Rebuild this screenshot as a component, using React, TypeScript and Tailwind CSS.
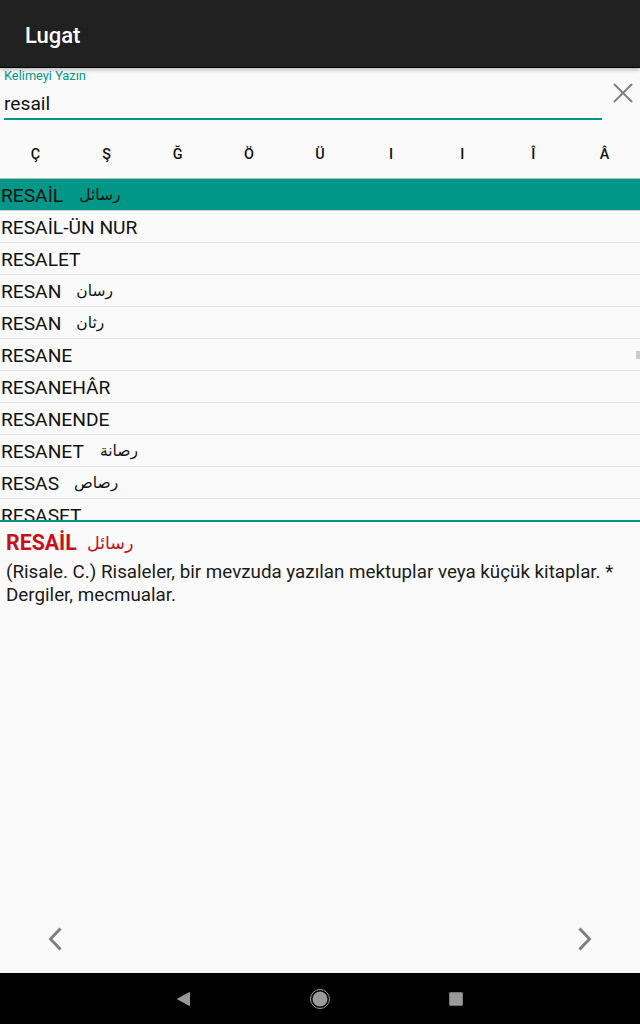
import React from "react";
import { X } from "lucide-react";

const letters = ["Ç", "Ş", "Ğ", "Ö", "Ü", "I", "I", "Î", "Â"];

const words = [
  { word: "RESAİL", arabic: "رسائل", gap: "ml-[16px]" },
  { word: "RESAİL-ÜN NUR" },
  { word: "RESALET" },
  { word: "RESAN", arabic: "رسان", gap: "ml-[15px]" },
  { word: "RESAN", arabic: "رثان", gap: "ml-[15px]" },
  { word: "RESANE" },
  { word: "RESANEHÂR" },
  { word: "RESANENDE" },
  { word: "RESANET", arabic: "رصانة", gap: "ml-[16px]" },
  { word: "RESAS", arabic: "رصاص", gap: "ml-[15px]" },
  { word: "RESASET" },
];

const App = () => {
  return (
    <div className="w-[640px] h-[1024px] flex flex-col bg-[#fafafa] overflow-hidden font-['Roboto',sans-serif]">
      {/* app bar */}
      <div className="h-[68px] shrink-0 bg-[#212121] border-b border-black flex items-center pl-[25px] shadow-[0_2px_4px_rgba(0,0,0,0.25)] z-10">
        <span className="text-[22px] font-medium text-white mt-[4px]">Lugat</span>
      </div>

      {/* search */}
      <div className="h-[52px] shrink-0 flex pl-[4px]">
        <div className="w-[598px] h-[52px] border-b-2 border-[#009688] flex flex-col">
          <span className="text-[12.8px] leading-[14px] text-[#009688] mt-[1px]">Kelimeyi Yazın</span>
          <span className="text-[19.2px] leading-[24px] text-[#111111] mt-[9px]">resail</span>
        </div>
        <div className="flex-1 flex justify-center">
          <X size={34} strokeWidth={1.4} className="text-[#808080] mt-[8px] ml-[4px]" />
        </div>
      </div>

      {/* letters */}
      <div className="h-[58px] shrink-0 grid grid-cols-9 items-center">
        {letters.map((l, i) => (
          <span key={i} className="text-center text-[14.4px] font-medium text-[#111111] pt-[11px]">
            {l}
          </span>
        ))}
      </div>

      {/* word list */}
      <div className="relative h-[342px] shrink-0 overflow-hidden border-t border-[#b0b8b6]">
        {words.map((w, i) => (
          <div
            key={i}
            className={
              i === 0
                ? "h-[32px] shrink-0 flex items-center pl-[1px] pt-[3px] bg-[#009688] border-b border-[#c8cfcd] text-[19.2px] text-[#111111]"
                : "h-[32px] shrink-0 flex items-center pl-[1px] pt-[3px] border-b border-[#e2e2e2] text-[19.2px] text-[#111111]"
            }
          >
            <span>{w.word}</span>
            {w.arabic && (
              <span className={`${w.gap} font-['DejaVu_Sans',sans-serif] text-[15.5px]`} dir="rtl">
                {w.arabic}
              </span>
            )}
          </div>
        ))}
        <div className="absolute right-0 top-[172px] w-[4px] h-[8px] bg-[#cccccc]" />
      </div>

      {/* detail */}
      <div className="flex-1 min-h-0 border-t-2 border-[#009688] px-[6px] pt-[8px] relative">
        <div className="flex items-center h-[26px]">
          <span className="text-[21.33px] font-bold text-[#c8101c]">RESAİL</span>
          <span className="ml-[10px] text-[17.5px] text-[#c8101c] font-['DejaVu_Sans',sans-serif]" dir="rtl">
            رسائل
          </span>
        </div>
        <p className="text-[18.8px] leading-[23px] text-[#1a1a1a] mt-[5px]">
          (Risale. C.) Risaleler, bir mevzuda yazılan mektuplar veya küçük kitaplar. * Dergiler, mecmualar.
        </p>
        <svg width="16" height="24" viewBox="0 0 16 24" className="absolute left-[47px] top-[405px]">
          <path d="M13.5 1.5 L3.5 12 L13.5 22.5" fill="none" stroke="#808080" strokeWidth="3" />
        </svg>
        <svg width="16" height="24" viewBox="0 0 16 24" className="absolute left-[577px] top-[405px]">
          <path d="M2.5 1.5 L12.5 12 L2.5 22.5" fill="none" stroke="#808080" strokeWidth="3" />
        </svg>
      </div>

      {/* nav bar */}
      <div className="h-[51px] shrink-0 bg-black flex items-center justify-center gap-[116px]">
        <svg width="20" height="20" viewBox="0 0 20 20">
          <path d="M3.5 10 L15.5 3.5 V16.5 Z" fill="#9a9a9a" stroke="#9a9a9a" strokeLinejoin="round" />
        </svg>
        <svg width="20" height="20" viewBox="0 0 20 20">
          <circle cx="10" cy="10" r="9.5" fill="none" stroke="#9a9a9a" strokeWidth="1" />
          <circle cx="10" cy="10" r="7.5" fill="#9a9a9a" />
        </svg>
        <svg width="20" height="20" viewBox="0 0 20 20">
          <rect x="3.2" y="3.2" width="13.6" height="13.6" rx="1" fill="#9a9a9a" />
        </svg>
      </div>
    </div>
  );
};

export default App;
